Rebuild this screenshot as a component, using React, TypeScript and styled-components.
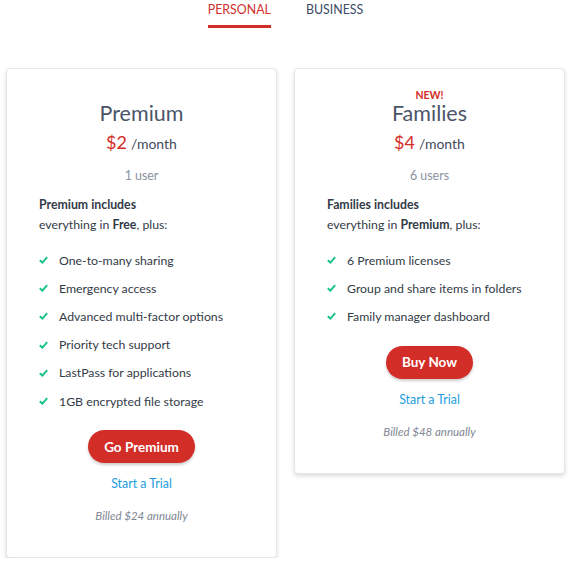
import React from "react"
import styled, { createGlobalStyle } from "styled-components"

const GlobalStyle = createGlobalStyle`
    body {
        margin: 0;
        background: #ffffff;
        font-family: Lato, "Open Sans", sans-serif;
    }
`

const Page = styled.div`
    width: 571px;
    display: flex;
    flex-direction: column;
    align-items: center;
`

const Tabs = styled.div`
    display: flex;
    gap: 35px;
    height: 68px;
`

const Tab = styled.div<{ $active?: boolean }>`
    font-size: 12.4px;
    line-height: 20px;
    text-transform: uppercase;
    color: ${({ $active }) => ($active ? "#d0312d" : "#3d4c66")};
    height: 25px;
    border-bottom: 3px solid ${({ $active }) => ($active ? "#d32d27" : "transparent")};
`

const Cards = styled.div`
    display: flex;
    gap: 17px;
    align-items: flex-start;
`

const Card = styled.div`
    width: 271px;
    box-sizing: border-box;
    border: 1px solid #e6e6e6;
    border-radius: 4px;
    box-shadow: 0 2px 4px rgba(0, 0, 0, 0.14);
    background: #fff;
    padding: 19px 32px 32px;
    display: flex;
    flex-direction: column;
    align-items: center;
`

const Badge = styled.div<{ $empty?: boolean }>`
    height: 14px;
    line-height: 14px;
    font-size: 10.5px;
    font-weight: 700;
    color: #d32d27;
    visibility: ${({ $empty }) => ($empty ? "hidden" : "visible")};
`

const Title = styled.div`
    font-size: 21.5px;
    line-height: 22px;
    color: #4b5568;
`

const Price = styled.div`
    margin-top: 4px;
    line-height: 28px;
    color: #3f4a5a;
    font-size: 14px;
`

const Amount = styled.span`
    font-size: 18px;
    color: #d32d27;
    margin-right: 4px;
`

const Users = styled.div`
    margin-top: 9px;
    line-height: 18px;
    font-size: 12.4px;
    color: #8a929e;
`

const Includes = styled.div`
    align-self: stretch;
    margin-top: 10px;
    font-size: 12.3px;
    line-height: 20px;
    color: #333b47;

    b {
        font-weight: 700;
    }
`

const Features = styled.ul`
    align-self: stretch;
    list-style: none;
    margin: 11px 0 0;
    padding: 0;
`

const Feature = styled.li`
    display: flex;
    align-items: center;
    height: 28.2px;
    font-size: 12.3px;
    color: #333b47;

    svg {
        width: 9px;
        height: 8px;
        margin-right: 11px;
        flex-shrink: 0;
    }
`

const CtaButton = styled.button`
    margin-top: 15px;
    height: 33px;
    padding: 0 16px;
    border: none;
    border-radius: 17px;
    background: #d32d27;
    color: #fff;
    font-family: inherit;
    font-size: 13.5px;
    font-weight: 700;
    box-shadow: 0 2px 3px rgba(0, 0, 0, 0.2);
`

const TrialLink = styled.a`
    margin-top: 11px;
    line-height: 20px;
    font-size: 12.4px;
    color: #1d9de0;
    text-decoration: none;
`

const Billed = styled.div`
    margin-top: 13px;
    line-height: 18px;
    font-size: 11.5px;
    font-style: italic;
    color: #7f8794;
`

const Check = () => (
    <svg viewBox="0 0 9 8">
        <path d="M0.8 4.2 L3.4 6.6 L8.2 1.2" fill="none" stroke="#19c28a" strokeWidth="2" />
    </svg>
)

const plans = [
    {
        name: "Premium",
        badge: "",
        price: "$2",
        users: "1 user",
        base: "Free",
        features: [
            "One-to-many sharing",
            "Emergency access",
            "Advanced multi-factor options",
            "Priority tech support",
            "LastPass for applications",
            "1GB encrypted file storage",
        ],
        cta: "Go Premium",
        billed: "Billed $24 annually",
    },
    {
        name: "Families",
        badge: "NEW!",
        price: "$4",
        users: "6 users",
        base: "Premium",
        features: [
            "6 Premium licenses",
            "Group and share items in folders",
            "Family manager dashboard",
        ],
        cta: "Buy Now",
        billed: "Billed $48 annually",
    },
]

export default function App() {
    return (
        <Page>
            <GlobalStyle />
            <Tabs>
                <Tab $active>Personal</Tab>
                <Tab>Business</Tab>
            </Tabs>
            <Cards>
                {plans.map((plan) => (
                    <Card key={plan.name}>
                        <Badge $empty={!plan.badge}>{plan.badge || "NEW!"}</Badge>
                        <Title>{plan.name}</Title>
                        <Price>
                            <Amount>{plan.price}</Amount>/month
                        </Price>
                        <Users>{plan.users}</Users>
                        <Includes>
                            <b>{plan.name} includes</b>
                            <br />
                            everything in <b>{plan.base}</b>, plus:
                        </Includes>
                        <Features>
                            {plan.features.map((f) => (
                                <Feature key={f}>
                                    <Check />
                                    {f}
                                </Feature>
                            ))}
                        </Features>
                        <CtaButton>{plan.cta}</CtaButton>
                        <TrialLink href="#">Start a Trial</TrialLink>
                        <Billed>{plan.billed}</Billed>
                    </Card>
                ))}
            </Cards>
        </Page>
    )
}
